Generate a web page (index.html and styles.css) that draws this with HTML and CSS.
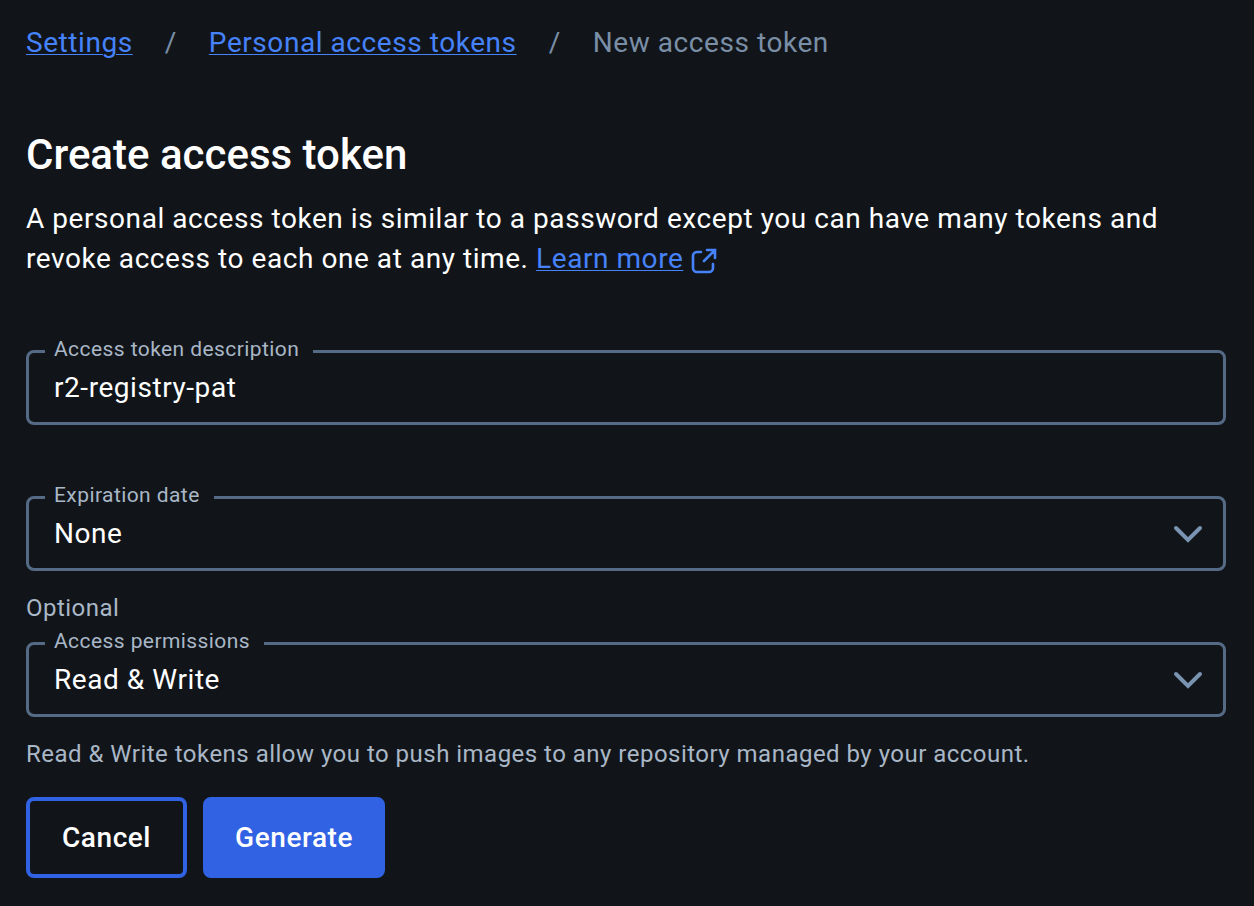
FILE: index.html
```html
<!DOCTYPE html>
<html lang="en">
<head>
  <meta charset="UTF-8" />
  <meta name="viewport" content="width=device-width, initial-scale=1" />
  <title>New access token</title>
  <link rel="stylesheet" href="styles.css">
</head>
<body>
  <nav aria-label="Breadcrumb">
    <ol class="breadcrumbs">
      <li><a href="#settings">Settings</a></li>
      <li class="separator" aria-hidden="true">/</li>
      <li><a href="#tokens">Personal access tokens</a></li>
      <li class="separator" aria-hidden="true">/</li>
      <li>New access token</li>
    </ol>
  </nav>

  <main>
    <h1>Create access token</h1>
    <p class="intro">
      A personal access token is similar to a password except you can have many tokens and
      revoke access to each one at any time.
      <a href="#learn-more">Learn more</a>
      <svg class="external" viewBox="0 0 26 26" aria-hidden="true">
        <path d="M10 4H6a4 4 0 0 0-4 4v12a4 4 0 0 0 4 4h12a4 4 0 0 0 4-4v-4" />
        <path d="M16 2h8v8M24 2L13 13" />
      </svg>
    </p>

    <form onsubmit="return false">
      <fieldset class="field">
        <legend><label for="description">Access token description</label></legend>
        <input type="text" id="description" value="r2-registry-pat" />
      </fieldset>
      <p class="help"></p>

      <fieldset class="field">
        <legend><label for="expiration">Expiration date</label></legend>
        <div class="select">
          <select id="expiration">
            <option>None</option>
            <option>30 days</option>
            <option>90 days</option>
          </select>
          <svg viewBox="0 0 30 18" aria-hidden="true"><path d="M3 3l12 12L27 3" /></svg>
        </div>
      </fieldset>
      <p class="help">Optional</p>

      <fieldset class="field">
        <legend><label for="permissions">Access permissions</label></legend>
        <div class="select">
          <select id="permissions">
            <option>Read &amp; Write</option>
            <option>Read-only</option>
          </select>
          <svg viewBox="0 0 30 18" aria-hidden="true"><path d="M3 3l12 12L27 3" /></svg>
        </div>
      </fieldset>
      <p class="help">Read &amp; Write tokens allow you to push images to any repository managed by your account.</p>

      <div class="actions">
        <button type="button" class="btn outlined">Cancel</button>
        <button type="submit" class="btn filled">Generate</button>
      </div>
    </form>
  </main>
</body>
</html>
```
FILE: styles.css
```css
* {
  box-sizing: border-box;
  letter-spacing: 0.02em;
}
body {
  margin: 0;
  padding: 23px 28px 28px 26px;
  background: #11151a;
  color: #fff;
  font-family: Roboto, "Liberation Sans", sans-serif;
  font-size: 28px;
  line-height: 40px;
}
a {
  color: #4682fa;
  text-decoration-thickness: 1px;
  text-underline-offset: 2px;
}
.breadcrumbs {
  display: flex;
  flex-wrap: wrap;
  gap: 32px;
  margin: 0;
  padding: 0;
  list-style: none;
  color: #7a8fa6;
}
h1 {
  margin: 64px 0 16px;
  font-size: 42px;
  font-weight: 500;
  line-height: 56px;
  letter-spacing: 0;
}
.intro {
  margin: 0 0 59px;
}
.external {
  width: 26px;
  height: 26px;
  vertical-align: -6px;
  fill: none;
  stroke: #4682fa;
  stroke-width: 2.6;
  stroke-linecap: round;
}
.field {
  min-width: 0;
  margin: 0;
  padding: 0 16px 12px;
  border: 3px solid #556b85;
  border-radius: 8px;
}
.field legend {
  padding: 0 14px 5px 9px;
  color: #a9b7c6;
  font-size: 21px;
  line-height: 22px;
}
.field label {
  display: block;
}
.field input,
.field select {
  display: block;
  width: 100%;
  height: 45px;
  padding: 0 9px;
  border: 0;
  outline: 0;
  background: transparent;
  color: #fff;
  font: inherit;
  appearance: none;
}
.field option {
  background: #11151a;
}
.select {
  position: relative;
}
.select svg {
  position: absolute;
  right: 4px;
  top: 14px;
  width: 30px;
  height: 18px;
  fill: none;
  stroke: #7a93b0;
  stroke-width: 4;
  stroke-linecap: round;
  pointer-events: none;
}
.help {
  min-height: 59px;
  margin: 0;
  padding: 21px 0 6px;
  color: #a9b7c6;
  font-size: 24px;
  line-height: 32px;
}
.actions {
  display: flex;
  gap: 16px;
  margin-top: 21px;
}
.btn {
  height: 81px;
  padding: 0 28px;
  border: 4px solid #3062e3;
  border-radius: 8px;
  color: #fff;
  font: inherit;
  font-weight: 500;
  cursor: pointer;
}
.outlined {
  padding: 0 32px;
  background: transparent;
}
.filled {
  background: #3062e3;
}
```
